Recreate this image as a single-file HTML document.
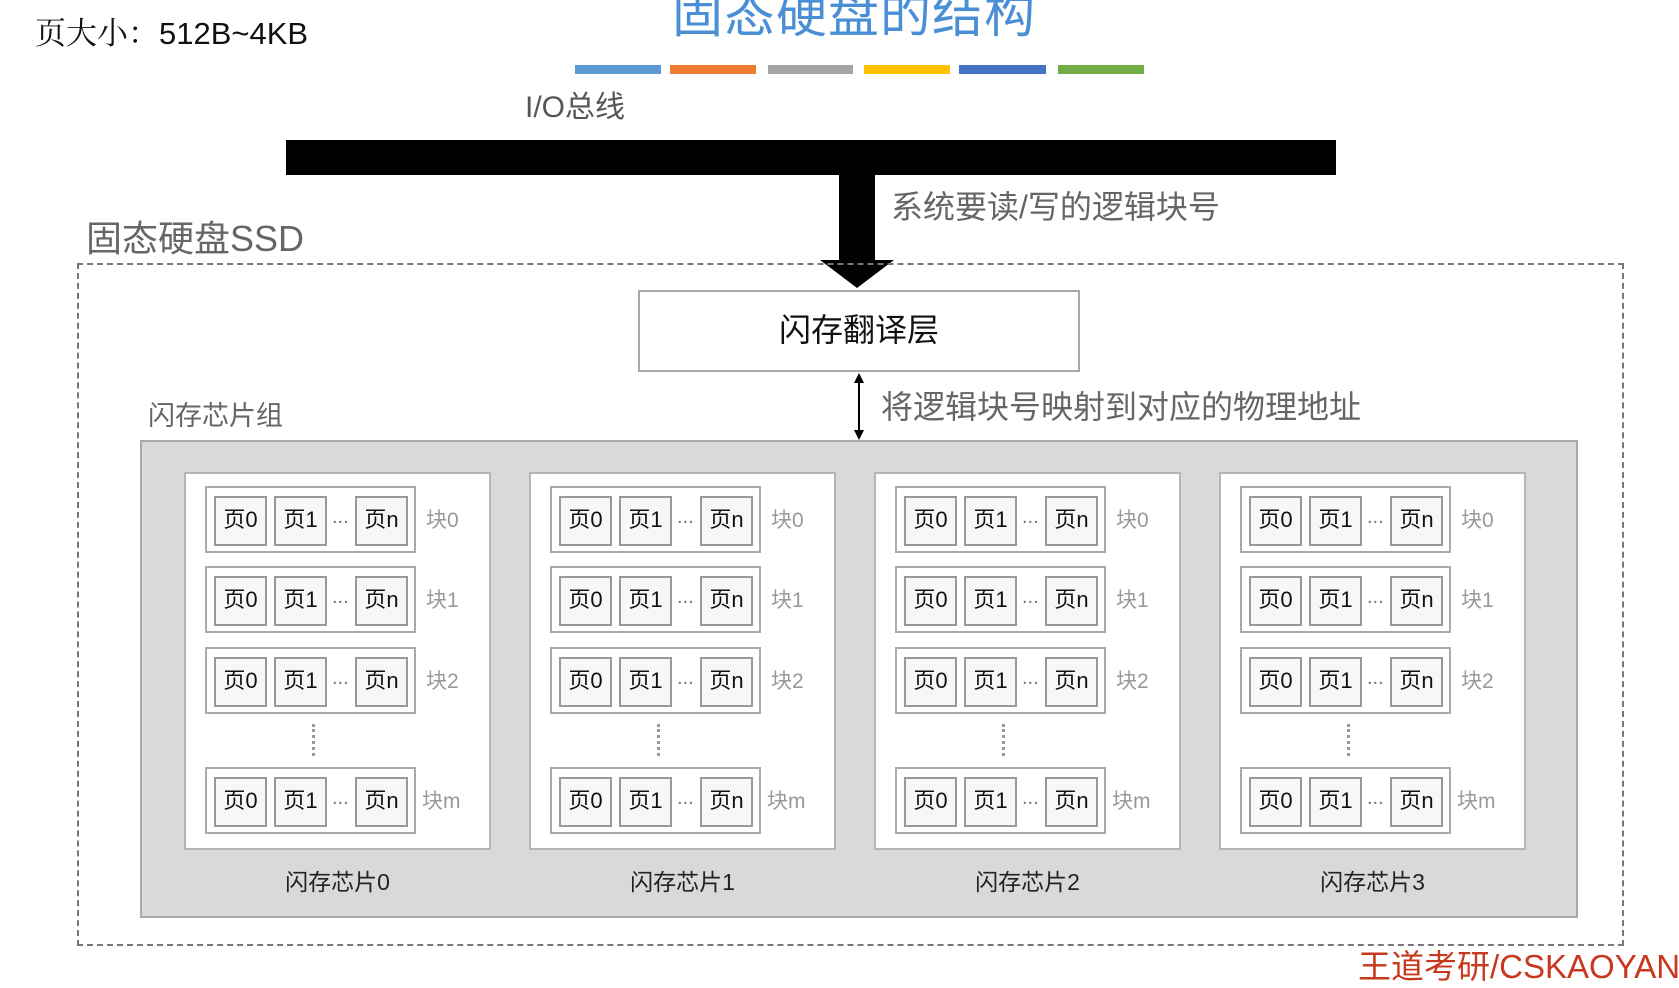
<!DOCTYPE html>
<html><head><meta charset="utf-8"><style>
*{margin:0;padding:0;box-sizing:border-box}
body{width:1679px;height:969px;background:#fff;position:relative;overflow:hidden;font-family:"Liberation Sans","Noto Sans CJK SC",sans-serif}
.a{position:absolute;white-space:nowrap}
.chip{position:absolute;top:472px;width:307px;height:378px;background:#fff;border:2px solid #b5b5b5}
.blk{position:absolute;left:19px;width:211px;height:67px;border:2px solid #aaa;background:#fff}
.pg{position:absolute;top:8px;width:53px;height:50px;border:2px solid #999;background:#f7f7f7;font-size:22px;line-height:44px;text-align:center;color:#111}
.dots{position:absolute;left:125px;top:18px;font-size:20px;color:#777}
.bl{position:absolute;left:240px;font-size:21px;color:#999}
.vd{position:absolute;left:126px;top:250px;width:3px;height:32px;border-left:3px dotted #999}
.cl{position:absolute;width:307px;text-align:center;top:863px;font-size:23px;color:#222}
</style></head><body>
<div class="a" style="left:35px;top:8px;font-size:31px;color:#111;font-family:'Liberation Sans','Noto Serif CJK SC',serif">页大小：512B~4KB</div>
<div class="a" style="left:672px;top:-27px;font-size:51px;color:#4a8fd6;letter-spacing:1px">固态硬盘的结构</div>
<div class="a" style="left:575px;top:65px;width:86px;height:9px;background:#5b9bd5"></div>
<div class="a" style="left:670px;top:65px;width:86px;height:9px;background:#ed7d31"></div>
<div class="a" style="left:768px;top:65px;width:85px;height:9px;background:#a5a5a5"></div>
<div class="a" style="left:864px;top:65px;width:86px;height:9px;background:#ffc000"></div>
<div class="a" style="left:959px;top:65px;width:87px;height:9px;background:#4472c4"></div>
<div class="a" style="left:1058px;top:65px;width:86px;height:9px;background:#70ad47"></div>
<div class="a" style="left:525px;top:82px;font-size:30px;color:#555">I/O总线</div>
<div class="a" style="left:286px;top:140px;width:1050px;height:35px;background:#000"></div>
<div class="a" style="left:839px;top:140px;width:36px;height:124px;background:#000"></div>
<svg class="a" style="left:820px;top:260px" width="74" height="30"><polygon points="0,0 74,0 37,28" fill="#000"/></svg>
<div class="a" style="left:891px;top:182px;font-size:32px;color:#666">系统要读/写的逻辑块号</div>
<div class="a" style="left:86px;top:210px;font-size:36px;color:#666">固态硬盘SSD</div>
<div class="a" style="left:77px;top:263px;width:1547px;height:683px;border:2px dashed #777"></div>
<div class="a" style="left:638px;top:290px;width:442px;height:82px;border:2px solid #aaa;background:#fff;font-size:32px;text-align:center;line-height:76px;color:#111">闪存翻译层</div>
<svg class="a" style="left:852px;top:373px" width="14" height="67"><line x1="7" y1="6" x2="7" y2="61" stroke="#000" stroke-width="2"/><polygon points="2,10 7,0 12,10" fill="#000"/><polygon points="2,57 7,67 12,57" fill="#000"/></svg>
<div class="a" style="left:881px;top:382px;font-size:32px;color:#666">将逻辑块号映射到对应的物理地址</div>
<div class="a" style="left:148px;top:394px;font-size:27px;color:#666">闪存芯片组</div>
<div class="a" style="left:140px;top:440px;width:1438px;height:478px;background:#d9d9d9;border:2px solid #aaa"></div>

<div class="chip" style="left:184px">
<div class="blk" style="top:12px"><div class="pg" style="left:7px">页0</div><div class="pg" style="left:67px">页1</div><div class="dots">...</div><div class="pg" style="left:148px">页n</div></div><div class="bl" style="top:30px">块0</div>
<div class="blk" style="top:92px"><div class="pg" style="left:7px">页0</div><div class="pg" style="left:67px">页1</div><div class="dots">...</div><div class="pg" style="left:148px">页n</div></div><div class="bl" style="top:110px">块1</div>
<div class="blk" style="top:173px"><div class="pg" style="left:7px">页0</div><div class="pg" style="left:67px">页1</div><div class="dots">...</div><div class="pg" style="left:148px">页n</div></div><div class="bl" style="top:191px">块2</div>
<div class="vd"></div>
<div class="blk" style="top:293px"><div class="pg" style="left:7px">页0</div><div class="pg" style="left:67px">页1</div><div class="dots">...</div><div class="pg" style="left:148px">页n</div></div><div class="bl" style="top:311px;left:236px">块m</div>
</div>
<div class="chip" style="left:529px">
<div class="blk" style="top:12px"><div class="pg" style="left:7px">页0</div><div class="pg" style="left:67px">页1</div><div class="dots">...</div><div class="pg" style="left:148px">页n</div></div><div class="bl" style="top:30px">块0</div>
<div class="blk" style="top:92px"><div class="pg" style="left:7px">页0</div><div class="pg" style="left:67px">页1</div><div class="dots">...</div><div class="pg" style="left:148px">页n</div></div><div class="bl" style="top:110px">块1</div>
<div class="blk" style="top:173px"><div class="pg" style="left:7px">页0</div><div class="pg" style="left:67px">页1</div><div class="dots">...</div><div class="pg" style="left:148px">页n</div></div><div class="bl" style="top:191px">块2</div>
<div class="vd"></div>
<div class="blk" style="top:293px"><div class="pg" style="left:7px">页0</div><div class="pg" style="left:67px">页1</div><div class="dots">...</div><div class="pg" style="left:148px">页n</div></div><div class="bl" style="top:311px;left:236px">块m</div>
</div>
<div class="chip" style="left:874px">
<div class="blk" style="top:12px"><div class="pg" style="left:7px">页0</div><div class="pg" style="left:67px">页1</div><div class="dots">...</div><div class="pg" style="left:148px">页n</div></div><div class="bl" style="top:30px">块0</div>
<div class="blk" style="top:92px"><div class="pg" style="left:7px">页0</div><div class="pg" style="left:67px">页1</div><div class="dots">...</div><div class="pg" style="left:148px">页n</div></div><div class="bl" style="top:110px">块1</div>
<div class="blk" style="top:173px"><div class="pg" style="left:7px">页0</div><div class="pg" style="left:67px">页1</div><div class="dots">...</div><div class="pg" style="left:148px">页n</div></div><div class="bl" style="top:191px">块2</div>
<div class="vd"></div>
<div class="blk" style="top:293px"><div class="pg" style="left:7px">页0</div><div class="pg" style="left:67px">页1</div><div class="dots">...</div><div class="pg" style="left:148px">页n</div></div><div class="bl" style="top:311px;left:236px">块m</div>
</div>
<div class="chip" style="left:1219px">
<div class="blk" style="top:12px"><div class="pg" style="left:7px">页0</div><div class="pg" style="left:67px">页1</div><div class="dots">...</div><div class="pg" style="left:148px">页n</div></div><div class="bl" style="top:30px">块0</div>
<div class="blk" style="top:92px"><div class="pg" style="left:7px">页0</div><div class="pg" style="left:67px">页1</div><div class="dots">...</div><div class="pg" style="left:148px">页n</div></div><div class="bl" style="top:110px">块1</div>
<div class="blk" style="top:173px"><div class="pg" style="left:7px">页0</div><div class="pg" style="left:67px">页1</div><div class="dots">...</div><div class="pg" style="left:148px">页n</div></div><div class="bl" style="top:191px">块2</div>
<div class="vd"></div>
<div class="blk" style="top:293px"><div class="pg" style="left:7px">页0</div><div class="pg" style="left:67px">页1</div><div class="dots">...</div><div class="pg" style="left:148px">页n</div></div><div class="bl" style="top:311px;left:236px">块m</div>
</div>
<div class="cl a" style="left:184px">闪存芯片0</div>
<div class="cl a" style="left:529px">闪存芯片1</div>
<div class="cl a" style="left:874px">闪存芯片2</div>
<div class="cl a" style="left:1219px">闪存芯片3</div>
<div class="a" style="left:1358px;top:940px;font-size:33px;color:#c8381e">王道考研/CSKAOYAN</div>
</body></html>
